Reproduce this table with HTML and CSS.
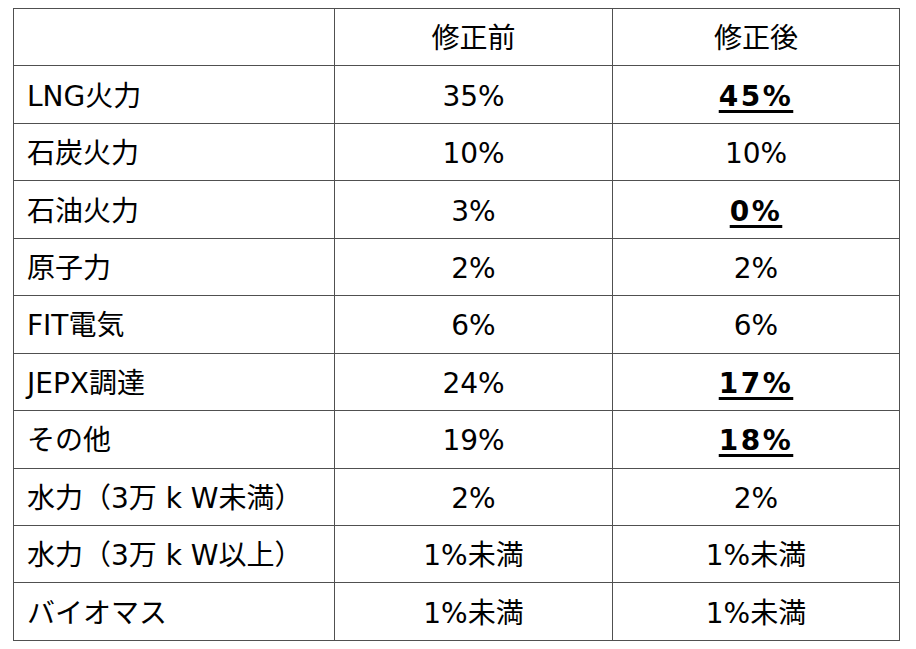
FILE: index.html
```html
<!DOCTYPE html>
<html lang="ja">
<head>
<meta charset="utf-8">
<link rel="stylesheet" href="styles.css">
</head>
<body>
<table class="mix">
  <colgroup><col class="c1"><col class="c2"><col class="c3"></colgroup>
  <tr><td></td><td class="num">修正前</td><td class="num">修正後</td></tr>
  <tr><td>LNG火力</td><td class="num">35%</td><td class="num"><span class="chg">45%</span></td></tr>
  <tr><td>石炭火力</td><td class="num">10%</td><td class="num">10%</td></tr>
  <tr><td>石油火力</td><td class="num">3%</td><td class="num"><span class="chg">0%</span></td></tr>
  <tr><td>原子力</td><td class="num">2%</td><td class="num">2%</td></tr>
  <tr><td>FIT電気</td><td class="num">6%</td><td class="num">6%</td></tr>
  <tr><td>JEPX調達</td><td class="num">24%</td><td class="num"><span class="chg">17%</span></td></tr>
  <tr><td>その他</td><td class="num">19%</td><td class="num"><span class="chg">18%</span></td></tr>
  <tr><td>水力（3万 k W未満）</td><td class="num">2%</td><td class="num">2%</td></tr>
  <tr><td>水力（3万 k W以上）</td><td class="num">1%未満</td><td class="num">1%未満</td></tr>
  <tr><td>バイオマス</td><td class="num">1%未満</td><td class="num">1%未満</td></tr>
</table>
</body>
</html>
```
FILE: styles.css
```css
html, body {
  margin: 0;
  padding: 0;
  background: #ffffff;
}
body {
  padding: 8px 0 0 13px;
  font-family: "DejaVu Sans", "Noto Sans CJK JP", sans-serif;
  color: #000;
}
.mix {
  border-collapse: collapse;
  table-layout: fixed;
  width: 886px;
  border: 1px solid #404040;
}
.c1 { width: 321px; }
.c2 { width: 278px; }
.c3 { width: 287px; }
.mix tr { height: 57.45px; }
.mix td {
  border: 1px solid #505050;
  padding: 4px 0 0 13px;
  font-size: 28px;
  line-height: 32px;
  white-space: nowrap;
  vertical-align: middle;
}
.mix td.num {
  text-align: center;
  padding-left: 0;
}
.chg {
  font-weight: bold;
  letter-spacing: 2.5px;
  text-decoration: underline;
  text-decoration-thickness: 3px;
  text-underline-offset: 4px;
}
```
